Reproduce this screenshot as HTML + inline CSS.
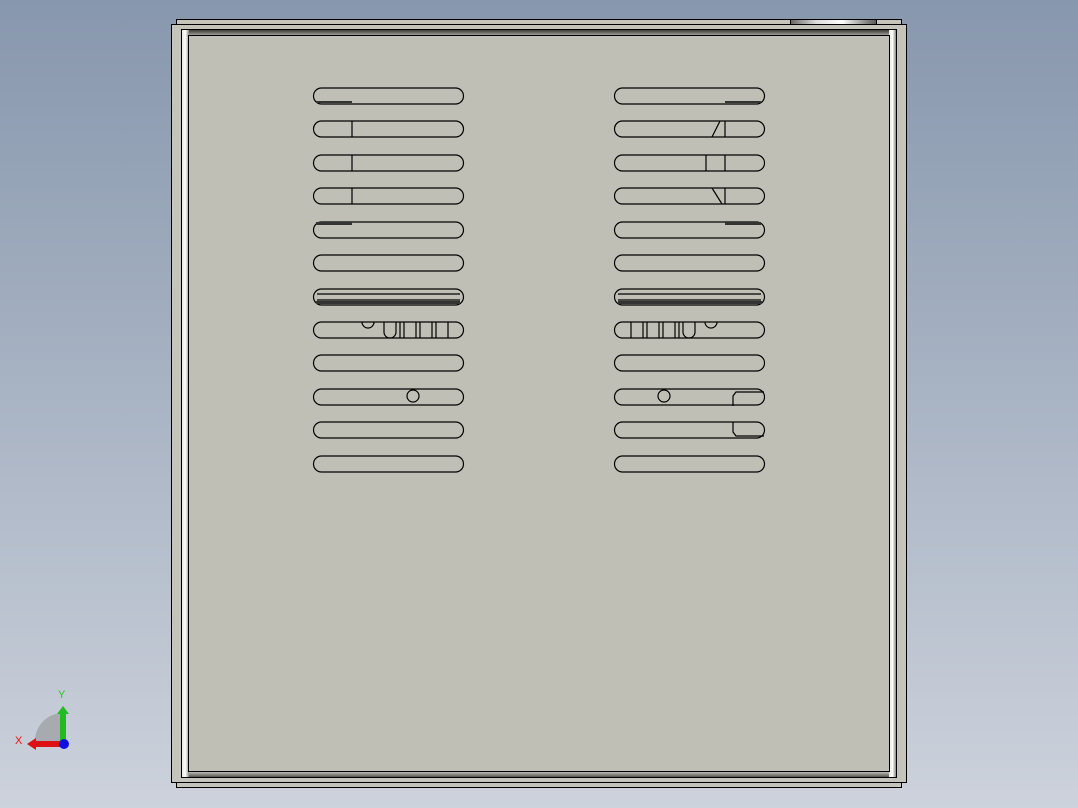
<!DOCTYPE html>
<html><head><style>
html,body{margin:0;padding:0}
body{width:1078px;height:808px;background:linear-gradient(#8797ad,#a9b4c4 50%,#cdd2dc);position:relative;overflow:hidden;font-family:"Liberation Sans",sans-serif}
</style></head><body>
<svg width="1078" height="808" style="position:absolute;left:0;top:0">
<defs>
<linearGradient id="vs" x1="0" x2="1"><stop offset="0" stop-color="#e8e8e0"/><stop offset=".5" stop-color="#ffffff"/><stop offset="1" stop-color="#8a8a80"/></linearGradient>
<linearGradient id="hs" x1="0" y1="0" x2="0" y2="1"><stop offset="0" stop-color="#3a3a36"/><stop offset="1" stop-color="#b0b0a8"/></linearGradient>
<linearGradient id="bs" x1="0" y1="0" x2="0" y2="1"><stop offset="0" stop-color="#d0d0c8"/><stop offset="1" stop-color="#555550"/></linearGradient>
<linearGradient id="knob" x1="0" x2="1"><stop offset="0" stop-color="#666"/><stop offset=".3" stop-color="#ddd"/><stop offset=".6" stop-color="#fff"/><stop offset="1" stop-color="#555"/></linearGradient>
</defs>
<rect x="176.5" y="19.5" width="725" height="768" fill="#c4c4bb" stroke="#000"/>
<rect x="790.5" y="19.5" width="86" height="5" fill="url(#knob)" stroke="#000"/>
<rect x="171.5" y="24.5" width="735" height="758" fill="#c4c4bb" stroke="#000"/>
<rect x="181.5" y="29.5" width="715" height="748" fill="#c0c0b7" stroke="#000"/>
<rect x="182" y="30" width="7" height="747" fill="url(#vs)"/>
<rect x="889" y="30" width="7" height="747" fill="url(#vs)"/>
<rect x="189" y="30" width="700" height="6" fill="url(#hs)"/>
<rect x="189" y="771" width="700" height="6" fill="url(#bs)"/>
<rect x="188.5" y="35.5" width="701" height="736" fill="#bfbfb6" stroke="#000"/>
<g fill="none" stroke="#000" stroke-width="1.2">
<rect x="313.5" y="88" width="150" height="16" rx="8"/>
<rect x="313.5" y="121" width="150" height="16" rx="8"/>
<rect x="313.5" y="155" width="150" height="16" rx="8"/>
<rect x="313.5" y="188" width="150" height="16" rx="8"/>
<rect x="313.5" y="222" width="150" height="16" rx="8"/>
<rect x="313.5" y="255" width="150" height="16" rx="8"/>
<rect x="313.5" y="289" width="150" height="16" rx="8"/>
<rect x="313.5" y="322" width="150" height="16" rx="8"/>
<rect x="313.5" y="355" width="150" height="16" rx="8"/>
<rect x="313.5" y="389" width="150" height="16" rx="8"/>
<rect x="313.5" y="422" width="150" height="16" rx="8"/>
<rect x="313.5" y="456" width="150" height="16" rx="8"/>
<rect x="614.5" y="88" width="150" height="16" rx="8"/>
<rect x="614.5" y="121" width="150" height="16" rx="8"/>
<rect x="614.5" y="155" width="150" height="16" rx="8"/>
<rect x="614.5" y="188" width="150" height="16" rx="8"/>
<rect x="614.5" y="222" width="150" height="16" rx="8"/>
<rect x="614.5" y="255" width="150" height="16" rx="8"/>
<rect x="614.5" y="289" width="150" height="16" rx="8"/>
<rect x="614.5" y="322" width="150" height="16" rx="8"/>
<rect x="614.5" y="355" width="150" height="16" rx="8"/>
<rect x="614.5" y="389" width="150" height="16" rx="8"/>
<rect x="614.5" y="422" width="150" height="16" rx="8"/>
<rect x="614.5" y="456" width="150" height="16" rx="8"/>
<path d="M352 121v16M352 155v16M352 188v16M725 121v16M706 155v16M725 155v16M725 188v16M712 137l8-16M712 188l10 16"/>
<path d="M317 294h143M317 300h143M618 294h143M618 300h143"/>
<circle cx="413" cy="396" r="6"/><circle cx="664" cy="396" r="6"/>
<path d="M384 322v10a6 6 0 0 0 12 0v-10M400 322v16M416 322v16M432 322v16M448 322v16M404 322v16M420 322v16M436 322v16"/>
<path d="M695 322v10a6 6 0 0 1-12 0v-10M679 322v16M663 322v16M647 322v16M631 322v16M675 322v16M659 322v16M643 322v16"/>
<path d="M362 322a6 6 0 0 0 12 0M705 322a6 6 0 0 0 12 0"/>
<path d="M764 392h-28l-3 4v10M764 436h-28l-3-4v-10"/>
</g>
<g fill="#333"><rect x="316" y="101" width="36" height="2"/><rect x="316" y="222" width="36" height="3"/><rect x="725" y="101" width="36" height="2"/><rect x="725" y="222" width="36" height="3"/><rect x="316" y="301" width="144" height="3"/><rect x="618" y="301" width="144" height="3"/></g>
<path d="M35 741a28 28 0 0 1 28-28v28z" fill="#9a9ca0" opacity=".7"/>
<rect x="60" y="712" width="6" height="30" fill="#22bb22"/>
<path d="M57 714l6-8 6 8z" fill="#22bb22"/>
<rect x="34" y="741" width="30" height="6" fill="#dd1111"/>
<path d="M36 738l-9 6 9 6z" fill="#dd1111"/>
<circle cx="64" cy="744" r="5" fill="#1010dd"/>
<text x="58" y="698" font-size="11" fill="#22cc22">Y</text>
<text x="15" y="744" font-size="11" fill="#ee1111">X</text>
</svg>
</body></html>
